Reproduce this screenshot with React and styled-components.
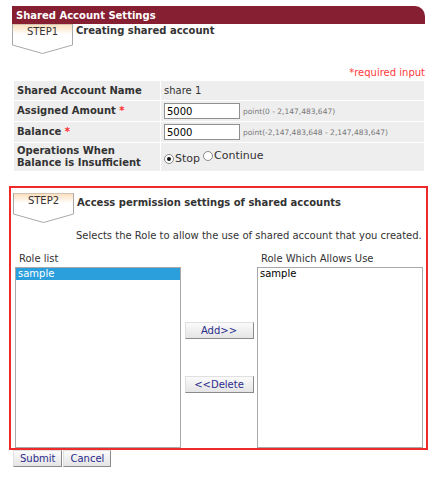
import React from "react";
import styled, { createGlobalStyle } from "styled-components";

const Global = createGlobalStyle`
    body {
        margin: 0;
        background: #fff;
        font-family: "DejaVu Sans", Verdana, sans-serif;
        font-size: 10px;
        color: #333;
    }
`;

const Page = styled.div`
    width: 418px;
    padding: 6px 0 0 10px;
`;

const Header = styled.div`
    height: 18px;
    margin-left: 2px;
    width: 413px;
    background: #871f33;
    color: #fff;
    font-weight: bold;
    font-size: 10px;
    line-height: 19px;
    padding-left: 4px;
    box-sizing: border-box;
    border-top-right-radius: 10px;
`;

const StepRow = styled.div`
    display: flex;
    align-items: flex-start;
    margin-left: ${p => p.$indent ?? 2}px;
    height: ${p => p.$h || 30}px;
`;

const TabWrap = styled.div`
    position: relative;
    width: 61px;
    height: 30px;
    flex: none;
`;

const TabText = styled.span`
    position: absolute;
    left: 0;
    right: 0;
    top: 2px;
    text-align: center;
    color: #333;
    font-size: 10px;
`;

const StepTitle = styled.div`
    font-weight: bold;
    color: #333;
    padding: ${p => p.$top || 1}px 0 0 3px;
`;

const Required = styled.div`
    text-align: right;
    color: #ff3b3b;
    width: 415px;
    margin: 13px 0 2px;
`;

const Table = styled.table`
    margin-left: 3px;
    width: 412px;
    border-collapse: separate;
    border-spacing: 1px;
`;

const Th = styled.th`
    width: 140px;
    background: #eeeeee;
    text-align: left;
    font-weight: bold;
    padding: 0 3px;
    height: ${p => p.$h || 19}px;
    line-height: 12px;
`;

const Td = styled.td`
    background: #eeeeee;
    padding: 0 3px;
`;

const Star = styled.span`
    color: #ff2a2a;
`;

const Field = styled.input`
    width: 76px;
    height: 16px;
    box-sizing: border-box;
    border: 1px solid #8f8f8f;
    font-family: inherit;
    font-size: 10px;
    padding: 0 2px;
    margin: 0;
    vertical-align: middle;
    color: #000;
`;

const Hint = styled.span`
    font-size: 7.5px;
    color: #777;
    margin-left: 3px;
`;

const Radio = styled.label`
    display: inline-flex;
    align-items: center;
    font-size: 11px;
    gap: 1px;
    margin-right: 3px;
`;

const Dot = styled.input.attrs({ type: "radio" })`
    appearance: none;
    width: 10px;
    height: 10px;
    margin: 0;
    border: 1px solid #8a8a8a;
    border-radius: 50%;
    background: #fff;
    box-sizing: border-box;
    display: inline-grid;
    place-content: center;
    &:checked::after {
        content: "";
        width: 4px;
        height: 4px;
        border-radius: 50%;
        background: #111;
    }
`;

const Box = styled.div`
    margin: 14px 0 0 -1px;
    width: 419px;
    height: 264px;
    box-sizing: border-box;
    border: 2px solid #ee2a2a;
    padding: 5px 3px 0 4px;
`;

const Desc = styled.div`
    padding-left: 61px;
    margin-top: 3px;
    white-space: nowrap;
    color: #333;
`;

const Lists = styled.div`
    display: grid;
    grid-template-columns: 166px 1fr 166px;
    margin-top: 11px;
`;

const Col = styled.div`
    display: flex;
    flex-direction: column;
`;

const ListLabel = styled.div`
    padding-left: ${p => p.$pad || 4}px;
    height: 15px;
    line-height: 13px;
`;

const ListBox = styled.div`
    height: 181px;
    border: 1px solid #a9a9a9;
    background: #fff;
    box-sizing: border-box;
`;

const Option = styled.div`
    height: 12px;
    line-height: 12px;
    padding-left: 2px;
    color: ${p => (p.$sel ? "#fff" : "#000")};
    background: ${p => (p.$sel ? "#2b9fdc" : "transparent")};
`;

const Middle = styled.div`
    display: flex;
    flex-direction: column;
    align-items: center;
    padding-top: 70px;
    gap: 37px;
`;

const Btn = styled.button`
    font-family: inherit;
    font-size: 10px;
    color: #2b2b8c;
    height: 17px;
    min-width: ${p => p.$w || 0}px;
    padding: 0 6px;
    border: 1px solid;
    border-color: #e0e0e0 #8a8a8a #8a8a8a #e0e0e0;
    background: linear-gradient(#fbfbfb, #e4e4e4);
`;

const Footer = styled.div`
    display: flex;
    gap: 1px;
    margin: 0 0 0 3px;
`;

function Tab({ label }) {
    return (
        <TabWrap>
            <svg width="61" height="30" viewBox="0 0 61 30">
                <defs>
                    <linearGradient id={"g" + label} x1="0" y1="0" x2="0" y2="1">
                        <stop offset="0" stopColor="#fbdcb8" />
                        <stop offset="0.35" stopColor="#fff" />
                        <stop offset="1" stopColor="#fff" />
                    </linearGradient>
                </defs>
                <polygon
                    points="0.5,0 60.5,0 60.5,21 30.5,29.5 0.5,21"
                    fill={"url(#g" + label + ")"}
                    stroke="#a9a9a9"
                    strokeWidth="1"
                />
            </svg>
            <TabText>{label}</TabText>
        </TabWrap>
    );
}

export default function App() {
    return (
        <Page>
            <Global />
            <Header>Shared Account Settings</Header>
            <StepRow>
                <Tab label="STEP1" />
                <StepTitle>Creating shared account</StepTitle>
            </StepRow>
            <Required>*required input</Required>
            <Table>
                <tbody>
                    <tr>
                        <Th $h={19}>Shared Account Name</Th>
                        <Td>share 1</Td>
                    </tr>
                    <tr>
                        <Th $h={20}>Assigned Amount <Star>*</Star></Th>
                        <Td>
                            <Field defaultValue="5000" />
                            <Hint>point(0 - 2,147,483,647)</Hint>
                        </Td>
                    </tr>
                    <tr>
                        <Th $h={20}>Balance <Star>*</Star></Th>
                        <Td>
                            <Field defaultValue="5000" />
                            <Hint>point(-2,147,483,648 - 2,147,483,647)</Hint>
                        </Td>
                    </tr>
                    <tr>
                        <Th $h={28}>Operations When<br />Balance is Insufficient</Th>
                        <Td>
                            <Radio><Dot name="op" defaultChecked />Stop</Radio>
                            <Radio><Dot name="op" />Continue</Radio>
                        </Td>
                    </tr>
                </tbody>
            </Table>
            <Box>
                <StepRow $indent={-2} $h={34}>
                    <Tab label="STEP2" />
                    <StepTitle $top={4}>Access permission settings of shared accounts</StepTitle>
                </StepRow>
                <Desc>Selects the Role to allow the use of shared account that you created.</Desc>
                <Lists>
                    <Col>
                        <ListLabel>Role list</ListLabel>
                        <ListBox>
                            <Option $sel>sample</Option>
                        </ListBox>
                    </Col>
                    <Middle>
                        <Btn $w={69}>Add&gt;&gt;</Btn>
                        <Btn $w={69}>&lt;&lt;Delete</Btn>
                    </Middle>
                    <Col>
                        <ListLabel $pad={4}>Role Which Allows Use</ListLabel>
                        <ListBox>
                            <Option>sample</Option>
                        </ListBox>
                    </Col>
                </Lists>
            </Box>
            <Footer>
                <Btn>Submit</Btn>
                <Btn>Cancel</Btn>
            </Footer>
        </Page>
    );
}
